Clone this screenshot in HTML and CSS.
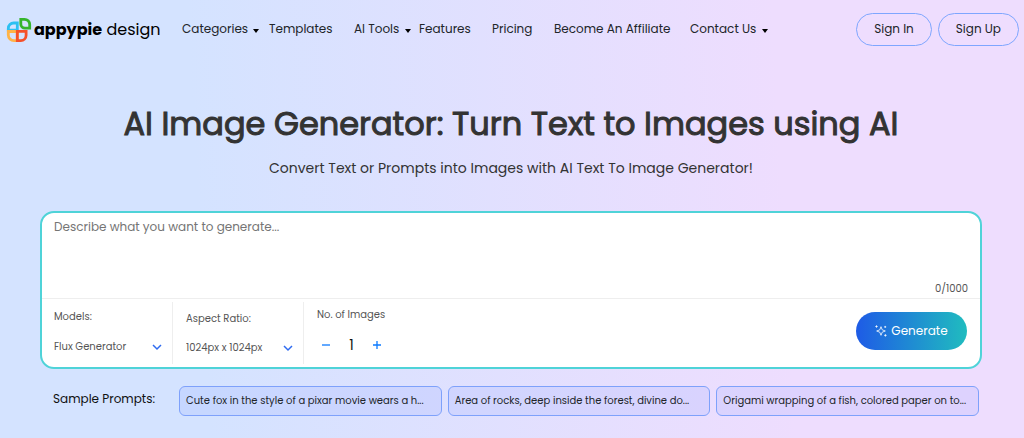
FILE: index.html
```html
<!DOCTYPE html>
<html lang="en">
<head>
<meta charset="utf-8">
<meta name="viewport" content="width=device-width, initial-scale=1">
<title>AI Image Generator</title>
<link rel="stylesheet" href="styles.css">
</head>
<body>
<header class="header">
  <a class="logo" href="#">
    <svg class="logo-mark" viewBox="0 0 26 26" fill="none" stroke-width="2.8" aria-hidden="true">
      <path d="M14.800 2.300h3.700a5.200 5.200 0 0 1 5.200 5.200v3.700h-4.700a4.200 4.200 0 0 1-4.200-4.200z" stroke="#35b52c"/>
      <path d="M2.300 13.200v-1.800a5.400 5.400 0 0 1 5.400-5.400h3.600v7.200z" stroke="#2cc0f2"/>
      <path d="M2.300 14.500h9v9.200H8a5.700 5.700 0 0 1-5.700-5.700z" stroke="#ffb347"/>
      <path d="M11.300 14.300h8.800v4a5.300 5.300 0 0 1-5.300 5.300h-3.500z" stroke="#f5502a"/>
    </svg>
    <span class="logo-text"><b>appypie</b> design</span>
  </a>
  <nav class="nav">
    <a href="#">Categories <span class="caret"></span></a>
    <a href="#">Templates</a>
    <a href="#">AI Tools <span class="caret"></span></a>
    <a href="#">Features</a>
    <a href="#">Pricing</a>
    <a href="#">Become An Affiliate</a>
    <a href="#">Contact Us <span class="caret"></span></a>
  </nav>
  <div class="account">
    <button class="outline-btn" type="button">Sign In</button>
    <button class="outline-btn" type="button">Sign Up</button>
  </div>
</header>
<main class="main">
  <h1 class="title">AI Image Generator: Turn Text to Images using AI</h1>
  <p class="subtitle">Convert Text or Prompts into Images with AI Text To Image Generator!</p>
  <form class="card">
    <div class="prompt">
      <textarea class="prompt-input" aria-label="Prompt" placeholder="Describe what you want to generate..."></textarea>
      <span class="counter">0/1000</span>
    </div>
    <div class="options">
      <div class="field field-models">
        <label for="model">Models:</label>
        <div class="select-wrap">
          <select id="model"><option>Flux Generator</option></select>
          <svg class="chevron" viewBox="0 0 10 6" aria-hidden="true"><path d="M1 1l4 4 4-4"/></svg>
        </div>
      </div>
      <div class="field field-ratio">
        <label for="ratio">Aspect Ratio:</label>
        <div class="select-wrap">
          <select id="ratio"><option>1024px x 1024px</option></select>
          <svg class="chevron" viewBox="0 0 10 6" aria-hidden="true"><path d="M1 1l4 4 4-4"/></svg>
        </div>
      </div>
      <div class="field field-count">
        <label for="count">No. of Images</label>
        <div class="stepper">
          <button type="button" aria-label="Fewer images"><svg viewBox="0 0 8 8"><path d="M0 4h8"/></svg></button>
          <input id="count" type="text" value="1">
          <button type="button" aria-label="More images"><svg viewBox="0 0 8 8"><path d="M0 4h8M4 0v8"/></svg></button>
        </div>
      </div>
      <button class="generate" type="submit">
        <svg class="spark" viewBox="0 0 12 12" aria-hidden="true">
          <path d="M6 1.700L7.200 4.800 10.300 6 7.200 7.200 6 10.300 4.800 7.200 1.700 6 4.800 4.800z"/>
          <path d="M1.500 .3v2.400M.3 1.500h2.400M10.200 .9v2M9.200 1.900h2M10.400 9.200v2.400M9.200 10.400h2.400"/>
        </svg>
        Generate
      </button>
    </div>
  </form>
  <section class="samples">
    <h2 class="samples-label">Sample Prompts:</h2>
    <button class="chip" type="button">Cute fox in the style of a pixar movie wears a h...</button>
    <button class="chip" type="button">Area of rocks, deep inside the forest, divine do...</button>
    <button class="chip" type="button">Origami wrapping of a fish, colored paper on to...</button>
  </section>
</main>
</body>
</html>
```
FILE: styles.css
```css
* { box-sizing: border-box; }
body {
  margin: 0;
  min-height: 100vh;
  font-family: Poppins, Inter, "Liberation Sans", sans-serif;
  font-size: 12px;
  color: #212529;
  background: linear-gradient(87deg, #d4e3ff 20%, #eeddfe 76%);
}
button, input, select, textarea { font: inherit; color: inherit; }
a { color: inherit; text-decoration: none; }

.header { display: flex; align-items: center; padding: 13px 5px 0 6px; }
.logo { display: flex; align-items: center; gap: 2px; width: 176px; color: #000; }
.logo-mark { width: 26px; height: 26px; flex: none; }
.logo-text { font-size: 16px; line-height: 24px; white-space: nowrap; }
.nav {
  flex: 1;
  display: grid;
  grid-template-columns: 87px 85px 65px 73px 62px 136px auto;
  padding-bottom: 2px;
  line-height: 20px;
  white-space: nowrap;
}
.caret {
  display: inline-block;
  margin-left: 2px;
  border: 3px solid transparent;
  border-top: 4px solid #000;
  border-bottom: 0;
  vertical-align: 0;
}
.account { display: flex; gap: 6px; }
.outline-btn {
  height: 33px;
  padding: 0 17px 2px;
  border: 1px solid #7ea6ff;
  border-radius: 17px;
  background: none;
}

.main { padding: 53px 42px 20px 40px; }
.title {
  margin: 0;
  text-align: center;
  font-size: 32px;
  line-height: 50px;
  font-weight: 400;
  -webkit-text-stroke: 1px #333;
  color: #333;
}
.subtitle {
  margin: 8px 0 32px;
  text-align: center;
  font-size: 14px;
  line-height: 22px;
  color: #333;
}

.card {
  border: 2px solid #4fd3d8;
  border-radius: 14px;
  background: #fff;
  color: #555;
}
.prompt { display: flex; flex-direction: column; border-bottom: 1px solid #eee; }
.prompt-input {
  display: block;
  height: 67px;
  padding: 4px 12px;
  border: 0;
  outline: 0;
  resize: none;
  background: none;
  font-size: 12px;
  line-height: 20px;
}
.prompt-input::placeholder { color: #757575; }
.counter { align-self: flex-end; padding-right: 12px; font-size: 10px; line-height: 18px; }
.options { display: flex; padding: 3px 13px 3px 12px; font-size: 10px; line-height: 16px; }
.field { height: 62px; display: flex; flex-direction: column; gap: 14px; }
.field-models { width: 119px; padding: 7px 10px 0 0; border-right: 1px solid #eee; }
.field-ratio { width: 131px; padding: 9px 10px 0 13px; gap: 13px; border-right: 1px solid #eee; }
.field-count { padding: 5px 0 0 13px; gap: 13px; }
.select-wrap { display: grid; grid-template-columns: 1fr 10px; align-items: center; }
.select-wrap select {
  grid-area: 1 / 1 / 2 / 3;
  width: 100%;
  padding: 0 10px 0 0;
  border: 0;
  background: none;
  appearance: none;
}
.chevron {
  grid-area: 1 / 2;
  width: 10px;
  height: 6px;
  fill: none;
  stroke: #2f6bf0;
  stroke-width: 1.500;
  overflow: visible;
  pointer-events: none;
}
.stepper { display: flex; align-items: center; }
.stepper button { display: flex; width: 18px; height: 16px; padding: 4px 5px; border: 0; background: none; }
.stepper svg { width: 8px; height: 8px; stroke: #0d7bff; stroke-width: 1.300; }
.stepper input {
  width: 33px;
  height: 18px;
  padding: 0;
  border: 0;
  background: none;
  text-align: center;
  font-size: 14px;
  color: #111;
}
.generate {
  display: flex;
  align-items: center;
  justify-content: center;
  gap: 4px;
  width: 111px;
  height: 38px;
  margin: 10px 0 0 auto;
  padding: 0;
  border: 0;
  border-radius: 19px;
  background: linear-gradient(90deg, #1e5be6, #20bcbf);
  color: #fff;
  font-size: 12px;
}
.spark { width: 12px; height: 12px; fill: none; stroke: #fff; stroke-width: .8; }

.samples {
  display: grid;
  grid-template-columns: 120px repeat(3, minmax(0, 1fr));
  column-gap: 6px;
  padding: 17px 3px 0 13px;
}
.samples-label { margin: 0; font-size: 12px; line-height: 25px; font-weight: 400; color: #111; }
.chip {
  height: 30px;
  padding: 0 6px;
  border: 1px solid #7ea1fb;
  border-radius: 6px;
  background: rgba(105, 140, 255, .13);
  font-size: 10px;
  text-align: left;
  white-space: nowrap;
  overflow: hidden;
}
```
